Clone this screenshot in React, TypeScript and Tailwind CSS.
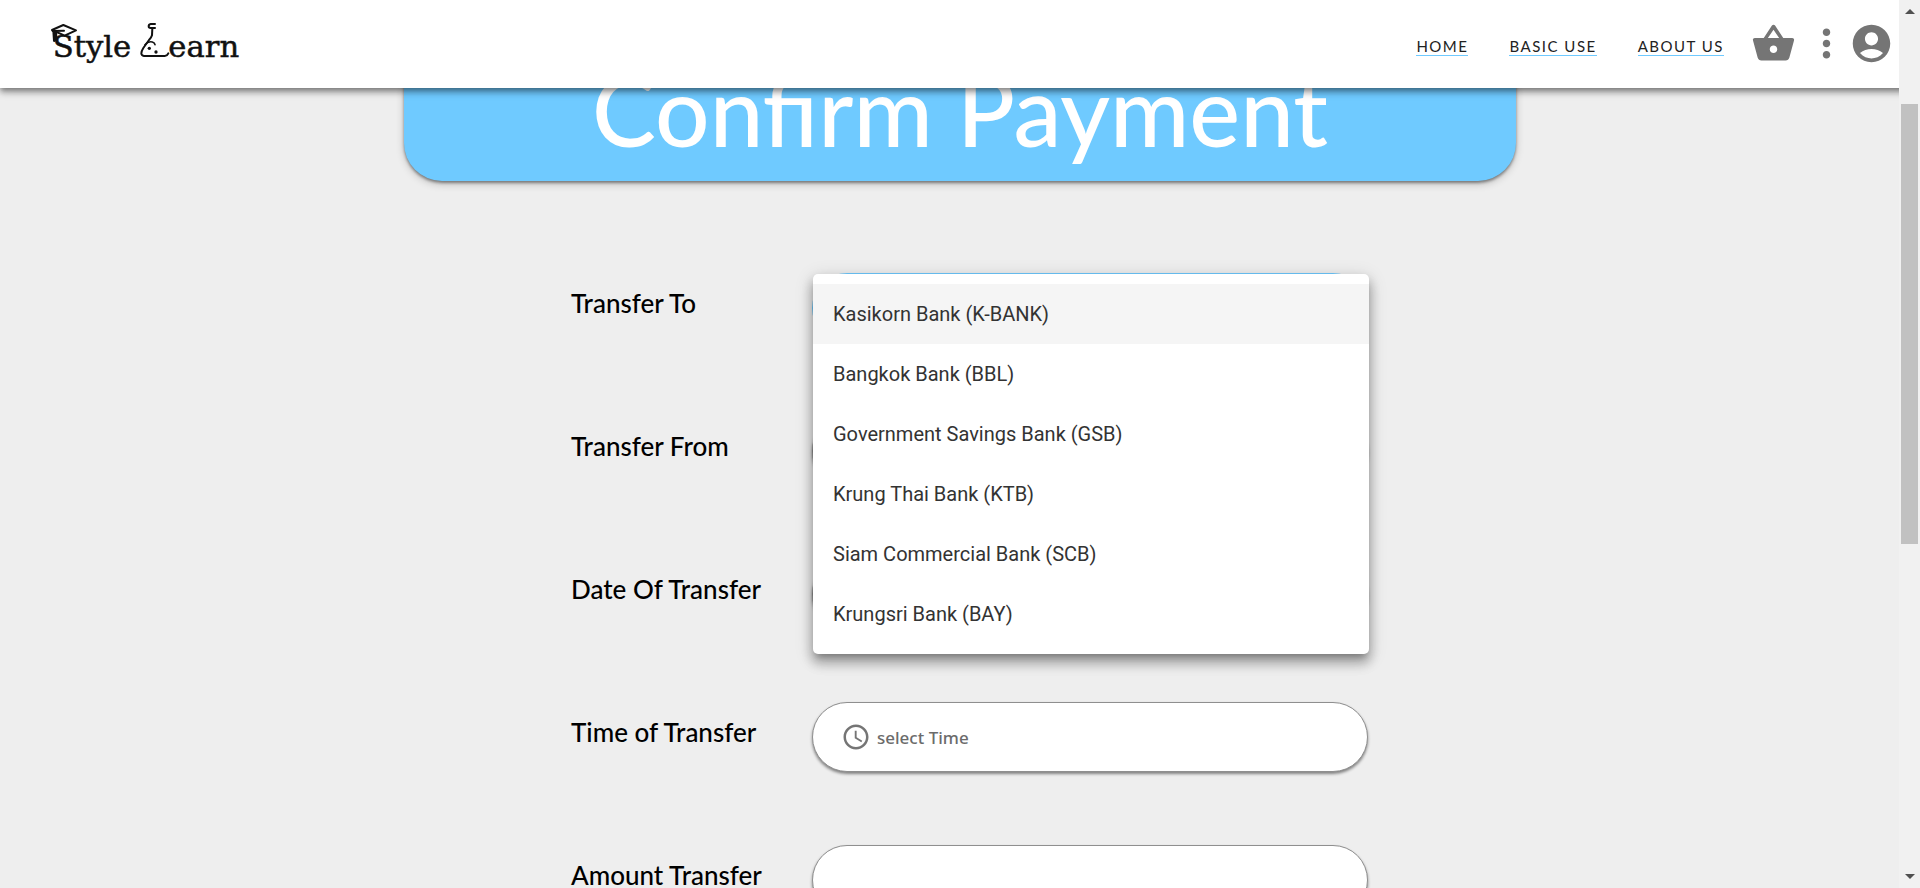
import { MdAccessTime, MdAccountCircle, MdMoreVert, MdShoppingBasket } from "react-icons/md";

const banks = [
  "Kasikorn Bank (K-BANK)",
  "Bangkok Bank (BBL)",
  "Government Savings Bank (GSB)",
  "Krung Thai Bank (KTB)",
  "Siam Commercial Bank (SCB)",
  "Krungsri Bank (BAY)",
];

const navLinks = ["HOME", "BASIC USE", "ABOUT US"];

const labelClass = "pb-[10px] text-[26px] leading-8 font-medium text-black";
const fieldClass =
  "h-[70px] w-full appearance-none rounded-full border border-[#8f8f8f] bg-white px-7 shadow-[0_2px_3px_rgba(0,0,0,0.45)] outline-none";

function Logo() {
  return (
    <svg viewBox="60 66 576 132" className="h-11 w-48" role="img" aria-label="Style Learn">
      <g fill="#111" stroke="#111" strokeWidth="1.5" fontFamily="'DejaVu Serif', serif" fontSize="92">
        <text x="68" y="170">Style</text>
        <text x="415" y="170">earn</text>
      </g>
      <g fill="none" stroke="#111" strokeWidth="6" strokeLinecap="round" strokeLinejoin="round">
        <path d="M66 90 L100 75 L138 91 L104 107 Z" fill="#fff" />
        <path d="M68 93 L102 92" />
        <path d="M71 93 L73 122 M77 96 L79 120" strokeWidth="8" />
        <path d="M375 72 H362 Q356 73 356 79 Q356 84 362 84 H375 M367 85 L366 106 Q364 113 357 120 L340 144 Q327 165 342 168 H404 Q412 167 415 160" />
        <path d="M345 134 Q354 123 367 126 Q374 128 375 134" strokeWidth="5" />
      </g>
      <circle cx="358" cy="145" r="5" fill="#111" />
      <circle cx="378" cy="156" r="5" fill="#111" />
    </svg>
  );
}

function Header() {
  return (
    <header className="relative z-10 flex h-[88px] items-center justify-between bg-white pr-[26px] pl-[50px] shadow-[0_3px_5px_-1px_rgba(0,0,0,0.3),0_5px_6px_rgba(0,0,0,0.2),0_1px_12px_rgba(0,0,0,0.16)]">
      <a href="#home">
        <Logo />
      </a>
      <div className="flex items-center">
        <nav className="mr-[27px] flex gap-[41px] pt-1">
          {navLinks.map((name) => (
            <a
              key={name}
              href="#nav"
              className="border-b border-[#6fcaff] text-[15px] leading-[18px] tracking-[1.5px] text-[#222]"
            >
              {name}
            </a>
          ))}
        </nav>
        <div className="flex items-center pb-0.5 text-[45px] text-[#757575]">
          <button type="button" aria-label="Basket" className="mr-2">
            <MdShoppingBasket />
          </button>
          <button type="button" aria-label="More">
            <MdMoreVert />
          </button>
          <button type="button" aria-label="Account">
            <MdAccountCircle />
          </button>
        </div>
      </div>
    </header>
  );
}

function BankMenu() {
  return (
    <ul
      role="listbox"
      aria-label="Transfer To"
      className="absolute top-px left-px z-20 w-full rounded-[5px] bg-white py-[10px] font-[Roboto,sans-serif] text-[20px] text-[#333] shadow-[0_6px_6px_-4px_rgba(0,0,0,0.2),0_10px_12px_1px_rgba(0,0,0,0.14),0_4px_18px_2px_rgba(0,0,0,0.12),0_6px_12px_rgba(0,0,0,0.2)]"
    >
      {banks.map((bank, i) => (
        <li
          key={bank}
          role="option"
          aria-selected={i === 0}
          className="flex h-[60px] items-center px-5 aria-selected:bg-[#f5f5f5]"
        >
          {bank}
        </li>
      ))}
    </ul>
  );
}

function ScrollBar() {
  return (
    <div className="absolute inset-y-0 right-0 z-30 flex w-[21px] flex-col items-center justify-between bg-[#f1f1f1] py-[9px]" aria-hidden="true">
      <svg width="10" height="5" viewBox="0 0 10 5"><path d="M0 5 L5 0 L10 5 Z" fill="#505050" /></svg>
      <div className="absolute top-[104px] h-[440px] w-[17px] bg-[#c1c1c1]" />
      <svg width="10" height="5" viewBox="0 0 10 5"><path d="M0 0 L5 5 L10 0 Z" fill="#505050" /></svg>
    </div>
  );
}

export default function App() {
  return (
    <div className="relative h-screen overflow-hidden bg-[#eee] font-[Lato,sans-serif]">
      <Header />
      <main className="mx-auto w-full max-w-[1112px]">
        <div className="-mt-10 rounded-b-[38px] bg-[#6fcaff] pb-[10px] text-center shadow-[0_2px_3px_rgba(0,0,0,0.4),0_3px_8px_rgba(0,0,0,0.2)]">
          <h1 className="text-[96px] leading-[123px] font-medium text-white">Confirm Payment</h1>
        </div>
        <form className="mt-[92px] grid grid-cols-[241px_1fr] items-center gap-y-[73px] pr-[148px] pl-[167px]">
          <label htmlFor="to" className={labelClass}>Transfer To</label>
          <div className="relative">
            <select id="to" className="block h-[70px] w-full appearance-none rounded-full border border-[#6fcaff] bg-white px-8">
              {banks.map((bank) => (
                <option key={bank}>{bank}</option>
              ))}
            </select>
            <BankMenu />
          </div>

          <label htmlFor="from" className={labelClass}>Transfer From</label>
          <input id="from" className={fieldClass} />

          <label htmlFor="date" className={labelClass}>Date Of Transfer</label>
          <input id="date" className={fieldClass} />

          <label htmlFor="time" className={labelClass}>Time of Transfer</label>
          <div className={"flex items-center gap-1.5 " + fieldClass}>
            <MdAccessTime className="size-[30px] shrink-0 text-[#757575]" />
            <input
              id="time"
              placeholder="select Time"
              className="w-full pt-0.5 font-['Noto_Sans',sans-serif] text-[17px] font-medium outline-none placeholder:text-[#6b6b6b]"
            />
          </div>

          <label htmlFor="amount" className={labelClass}>Amount Transfer</label>
          <input id="amount" className={fieldClass} />
        </form>
      </main>
      <ScrollBar />
    </div>
  );
}
